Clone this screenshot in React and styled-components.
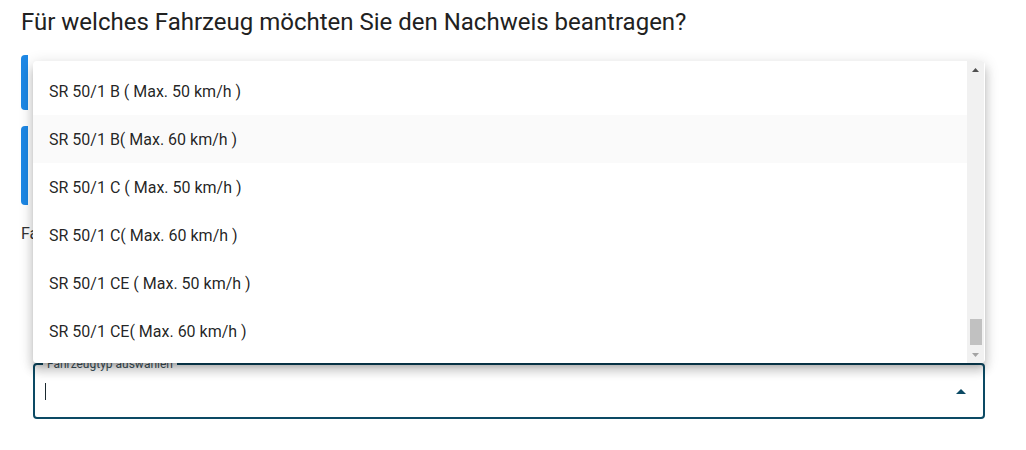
import React from "react";
import styled, { createGlobalStyle } from "styled-components";

const Global = createGlobalStyle`
  html, body { margin: 0; padding: 0; background: #fff; }
  body { font-family: Roboto, "Liberation Sans", Arial, sans-serif; color: rgba(0,0,0,0.87); }
  * { box-sizing: border-box; }
`;

const Page = styled.div`
  width: 1026px;
  height: 450px;
  overflow: hidden;
  padding: 8px 21px 0 21px;
  display: flex;
  flex-direction: column;
`;

const Title = styled.h1`
  margin: 0;
  font-size: 24px;
  line-height: 28px;
  font-weight: 400;
  color: #212121;
`;

const Card = styled.div`
  height: ${(p) => p.$h}px;
  margin-top: ${(p) => p.$mt}px;
  background: #fff;
  border-left: 7px solid #1e88e5;
  border-radius: 4px;
`;

const Hint = styled.div`
  margin-top: 19px;
  font-size: 16px;
  line-height: 20px;
  color: #333;
`;

const Field = styled.div`
  position: relative;
  margin: 119px 20px 0 12px;
  height: 56px;
  border: 2px solid #0c4a64;
  border-radius: 4px;
  display: flex;
  align-items: center;
  padding: 0 17px 0 10px;
`;

const Label = styled.span`
  position: absolute;
  left: 8px;
  top: -8px;
  padding: 0 4px;
  background: #fff;
  font-size: 12px;
  line-height: 14px;
  color: #40535c;
`;

const Caret = styled.span`
  width: 1px;
  height: 17px;
  background: #1b2a30;
`;

const Spacer = styled.div`
  flex: 1;
`;

const Menu = styled.div`
  position: absolute;
  left: -2px;
  right: -2px;
  bottom: calc(100% + 2px);
  height: 302px;
  background: #fff;
  border-radius: 4px;
  display: flex;
  overflow: hidden;
  z-index: 10;
  box-shadow: 0px 5px 5px -3px rgba(0,0,0,0.2), 0px 8px 10px 1px rgba(0,0,0,0.14), 0px 3px 14px 2px rgba(0,0,0,0.12);
`;

const List = styled.ul`
  flex: 1;
  margin: 0;
  padding: 6px 0 0;
  list-style: none;
`;

const Item = styled.li`
  height: 48px;
  display: flex;
  align-items: center;
  padding: 0 16px;
  font-size: 16px;
  color: rgba(0,0,0,0.87);
  background: ${(p) => (p.$hover ? "#fafafa" : "transparent")};
`;

const Scrollbar = styled.div`
  width: 17px;
  margin-right: 1px;
  background: #f1f1f1;
  display: flex;
  flex-direction: column;
  align-items: center;
`;

const ArrowBtn = styled.div`
  height: 17px;
  width: 17px;
  display: flex;
  align-items: center;
  justify-content: center;
`;

const Track = styled.div`
  flex: 1;
  width: 100%;
  display: flex;
  flex-direction: column;
  justify-content: flex-end;
  align-items: center;
  padding-bottom: 1px;
`;

const Thumb = styled.div`
  width: 12px;
  height: 26px;
  background: #c1c1c1;
`;

const Tri = ({ up, color, w = 7, h = 4 }) => (
  <svg width={w} height={h} viewBox={`0 0 ${w} ${h}`}>
    {up ? (
      <polygon points={`0,${h} ${w},${h} ${w / 2},0`} fill={color} />
    ) : (
      <polygon points={`0,0 ${w},0 ${w / 2},${h}`} fill={color} />
    )}
  </svg>
);

const items = [
  "SR 50/1 B ( Max. 50 km/h )",
  "SR 50/1 B( Max. 60 km/h )",
  "SR 50/1 C ( Max. 50 km/h )",
  "SR 50/1 C( Max. 60 km/h )",
  "SR 50/1 CE ( Max. 50 km/h )",
  "SR 50/1 CE( Max. 60 km/h )",
];

export default function App() {
  return (
    <>
      <Global />
      <Page>
        <Title>Für welches Fahrzeug möchten Sie den Nachweis beantragen?</Title>
        <Card $h={55} $mt={19} />
        <Card $h={79} $mt={16} />
        <Hint>Fahrzeugtyp</Hint>
        <Field>
          <Label>Fahrzeugtyp auswählen</Label>
          <Caret />
          <Spacer />
          <Tri up color="#0c4a64" w={10} h={5} />
          <Menu>
            <List>
              {items.map((t, i) => (
                <Item key={t} $hover={i === 1}>{t}</Item>
              ))}
            </List>
            <Scrollbar>
              <ArrowBtn><Tri up color="#505050" /></ArrowBtn>
              <Track><Thumb /></Track>
              <ArrowBtn><Tri color="#a3a3a3" /></ArrowBtn>
            </Scrollbar>
          </Menu>
        </Field>
      </Page>
    </>
  );
}
